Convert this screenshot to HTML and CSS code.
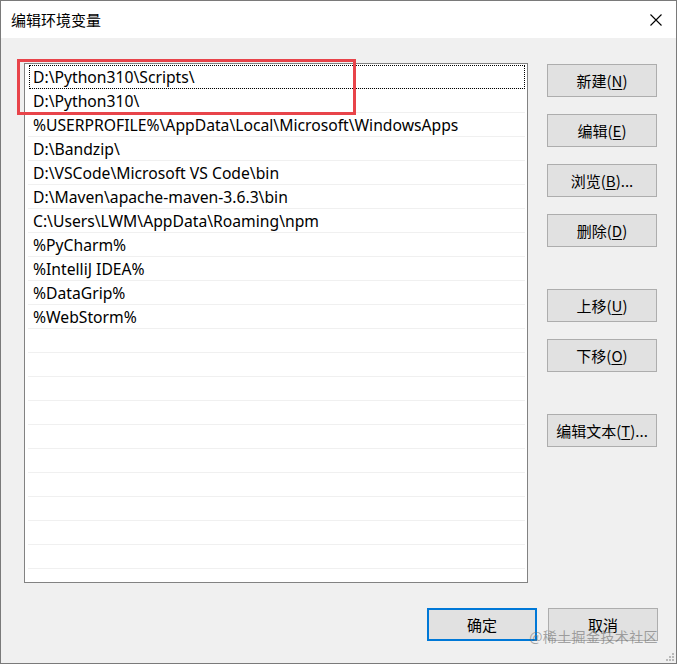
FILE: index.html
```html
<!DOCTYPE html>
<html>
<head>
<meta charset="utf-8">
<link rel="stylesheet" href="styles.css">
</head>
<body>
<div class="window">
  <div class="titlebar">
    <span class="title">编辑环境变量</span>
    <svg class="close" width="12" height="12" viewBox="0 0 12 12"><path d="M0.5 0.5L11.5 11.5M11.5 0.5L0.5 11.5" stroke="#000" stroke-width="1.1" fill="none"/></svg>
  </div>
  <div class="body">
    <div class="main">
      <div class="listwrap">
        <div class="list">
          <div class="row focus">D:\Python310\Scripts\</div>
          <div class="row">D:\Python310\</div>
          <div class="row">%USERPROFILE%\AppData\Local\Microsoft\WindowsApps</div>
          <div class="row">D:\Bandzip\</div>
          <div class="row">D:\VSCode\Microsoft VS Code\bin</div>
          <div class="row">D:\Maven\apache-maven-3.6.3\bin</div>
          <div class="row">C:\Users\LWM\AppData\Roaming\npm</div>
          <div class="row">%PyCharm%</div>
          <div class="row">%IntelliJ IDEA%</div>
          <div class="row">%DataGrip%</div>
          <div class="row">%WebStorm%</div>
          <div class="row"></div>
          <div class="row"></div>
          <div class="row"></div>
          <div class="row"></div>
          <div class="row"></div>
          <div class="row"></div>
          <div class="row"></div>
          <div class="row"></div>
          <div class="row"></div>
          <div class="row"></div>
        </div>
        <div class="highlight"></div>
      </div>
      <div class="side">
        <div class="group">
          <button class="btn">新建(<u>N</u>)</button>
          <button class="btn">编辑(<u>E</u>)</button>
          <button class="btn">浏览(<u>B</u>)...</button>
          <button class="btn">删除(<u>D</u>)</button>
        </div>
        <div class="group">
          <button class="btn">上移(<u>U</u>)</button>
          <button class="btn">下移(<u>O</u>)</button>
        </div>
        <div class="group">
          <button class="btn">编辑文本(<u>T</u>)...</button>
        </div>
      </div>
    </div>
    <div class="footer">
      <button class="btn primary">确定</button>
      <button class="btn">取消</button>
    </div>
  </div>
  <div class="watermark">@稀土掘金技术社区</div>
  <svg class="grip" width="10" height="10" viewBox="0 0 10 10">
    <rect x="7" y="1" width="2" height="2" fill="#b9b9b9"/>
    <rect x="4" y="4" width="2" height="2" fill="#b9b9b9"/>
    <rect x="7" y="4" width="2" height="2" fill="#b9b9b9"/>
    <rect x="1" y="7" width="2" height="2" fill="#b9b9b9"/>
    <rect x="4" y="7" width="2" height="2" fill="#b9b9b9"/>
    <rect x="7" y="7" width="2" height="2" fill="#b9b9b9"/>
  </svg>
</div>
</body>
</html>
```
FILE: styles.css
```css
* { box-sizing: border-box; }
html, body { margin: 0; padding: 0; background: #f0f0f0; }
body {
  font-family: "Noto Sans", "Noto Sans CJK SC", sans-serif;
  font-size: 15px;
  color: #000;
}
.window {
  position: relative;
  width: 677px;
  height: 664px;
  border: 1px solid #7a7a7a;
  background: #f0f0f0;
  display: flex;
  flex-direction: column;
}
.titlebar {
  height: 37px;
  background: #fff;
  display: flex;
  align-items: center;
  justify-content: space-between;
  padding: 0 14px 0 10px;
}
.title {
  font-family: "Noto Sans CJK SC", sans-serif;
  font-size: 15px;
  line-height: 1;
}
.close { margin-top: 1px; }
.body {
  flex: 1;
  padding: 25px 0 0 23px;
  display: flex;
  flex-direction: column;
}
.main {
  display: flex;
  gap: 19px;
}
.listwrap { position: relative; }
.list {
  width: 504px;
  height: 520px;
  background: #fff;
  border: 1px solid #828282;
  padding: 1px 2px 0 3px;
  overflow: hidden;
}
.row {
  height: 24px;
  border-bottom: 1px solid #f0f0f0;
  padding: 2px 0 0 5px;
  line-height: 21px;
  white-space: nowrap;
  font-family: "Noto Sans", "Noto Sans CJK SC", sans-serif;
  font-size: 15.7px;
}
.row.focus {
  outline: 1px dotted #000;
  outline-offset: -1px;
  margin-left: 1px;
  padding-left: 4px;
}
.highlight {
  position: absolute;
  left: -7px;
  top: -4px;
  width: 339px;
  height: 56px;
  border: 3px solid #e8444a;
}
.side {
  display: flex;
  flex-direction: column;
  gap: 42px;
  padding-top: 1px;
}
.group {
  display: flex;
  flex-direction: column;
  gap: 17px;
}
.btn {
  width: 110px;
  height: 33px;
  background: #e1e1e1;
  border: 1px solid #adadad;
  font-family: "Noto Sans CJK SC", sans-serif;
  font-size: 15px;
  color: #000;
  padding: 0;
  margin: 0;
  line-height: 1;
}
.btn u { text-underline-offset: 2px; }
.footer {
  display: flex;
  justify-content: flex-end;
  gap: 11px;
  margin-top: 25px;
  padding-right: 18px;
}
.btn.primary {
  border: 2px solid #0078d7;
}
.watermark {
  position: absolute;
  right: 18px;
  bottom: 17px;
  font-family: "Noto Sans CJK SC", sans-serif;
  font-size: 14px;
  color: rgba(110, 110, 110, 0.6);
  letter-spacing: 0.4px;
}
.grip {
  position: absolute;
  right: 1px;
  bottom: 1px;
}
```
